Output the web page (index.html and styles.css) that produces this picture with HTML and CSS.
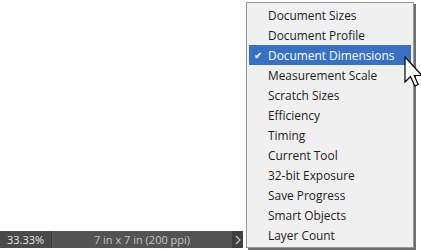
FILE: index.html
```html
<!DOCTYPE html>
<html>
<head>
<meta charset="utf-8">
<link rel="stylesheet" href="styles.css">
</head>
<body>
<div class="app">
  <div class="canvas"></div>
  <div class="status">
    <div class="zoom">33.33%</div>
    <div class="info">7 in x 7 in (200 ppi)</div>
    <div class="more"><svg width="6" height="10" viewBox="0 0 6 10"><path d="M1 1 L5 5 L1 9" fill="none" stroke="#c8c8c8" stroke-width="1.3"/></svg></div>
  </div>
</div>
<ul class="menu">
  <li class="item">Document Sizes</li>
  <li class="item">Document Profile</li>
  <li class="item selected"><span class="check">✔</span>Document Dimensions</li>
  <li class="item">Measurement Scale</li>
  <li class="item">Scratch Sizes</li>
  <li class="item">Efficiency</li>
  <li class="item">Timing</li>
  <li class="item">Current Tool</li>
  <li class="item">32-bit Exposure</li>
  <li class="item">Save Progress</li>
  <li class="item">Smart Objects</li>
  <li class="item">Layer Count</li>
</ul>
<svg class="cursor" width="20" height="34" viewBox="0 0 20 34">
  <path d="M1 1 L1 26 L6.5 20.5 L10.8 30 L14.2 28.5 L10.2 19.5 L18 19.5 Z" fill="#fff" stroke="#000" stroke-width="1.2" stroke-linejoin="miter"/>
</svg>
</body>
</html>
```
FILE: styles.css
```css
html, body {
  margin: 0;
  padding: 0;
  width: 421px;
  height: 250px;
  overflow: hidden;
  background: #ffffff;
}
.app {
  width: 421px;
  height: 250px;
  display: flex;
  flex-direction: column;
}
.canvas {
  flex: 1;
  background: #ffffff;
}
.status {
  height: 17px;
  width: 243px;
  margin-bottom: 2px;
  display: flex;
  background: #535353;
  font-family: "Open Sans", "Noto Sans", sans-serif;
  font-size: 11px;
  line-height: 17px;
}
.zoom {
  width: 52px;
  padding-left: 7px;
  box-sizing: border-box;
  background: #4a4a4a;
  color: #e6e6e6;
  border-right: 1px solid #3e3e3e;
}
.info {
  flex: 1;
  text-align: center;
  color: #c4c4c4;
}
.more {
  width: 11px;
  background: #3f3f3f;
  display: flex;
  align-items: center;
  justify-content: center;
}
.menu {
  position: absolute;
  left: 246px;
  top: 2px;
  width: 164px;
  height: 242px;
  margin: 0;
  padding: 2px 0 0 2px;
  list-style: none;
  background: #f0f0f0;
  border: 1px solid #979797;
  box-shadow: 2px 2px 0 #6e6e6e;
  font-family: "Open Sans", "Noto Sans", sans-serif;
  font-size: 11.9px;
  color: #1c1c1c;
}
.item {
  height: 20px;
  line-height: 20px;
  padding-left: 19px;
  width: 143px;
  position: relative;
}
.selected {
  background: #3871c3;
  color: #ffffff;
}
.check {
  position: absolute;
  left: 5px;
  top: 0;
  font-size: 10px;
}
.cursor {
  position: absolute;
  left: 404px;
  top: 56px;
}
```
